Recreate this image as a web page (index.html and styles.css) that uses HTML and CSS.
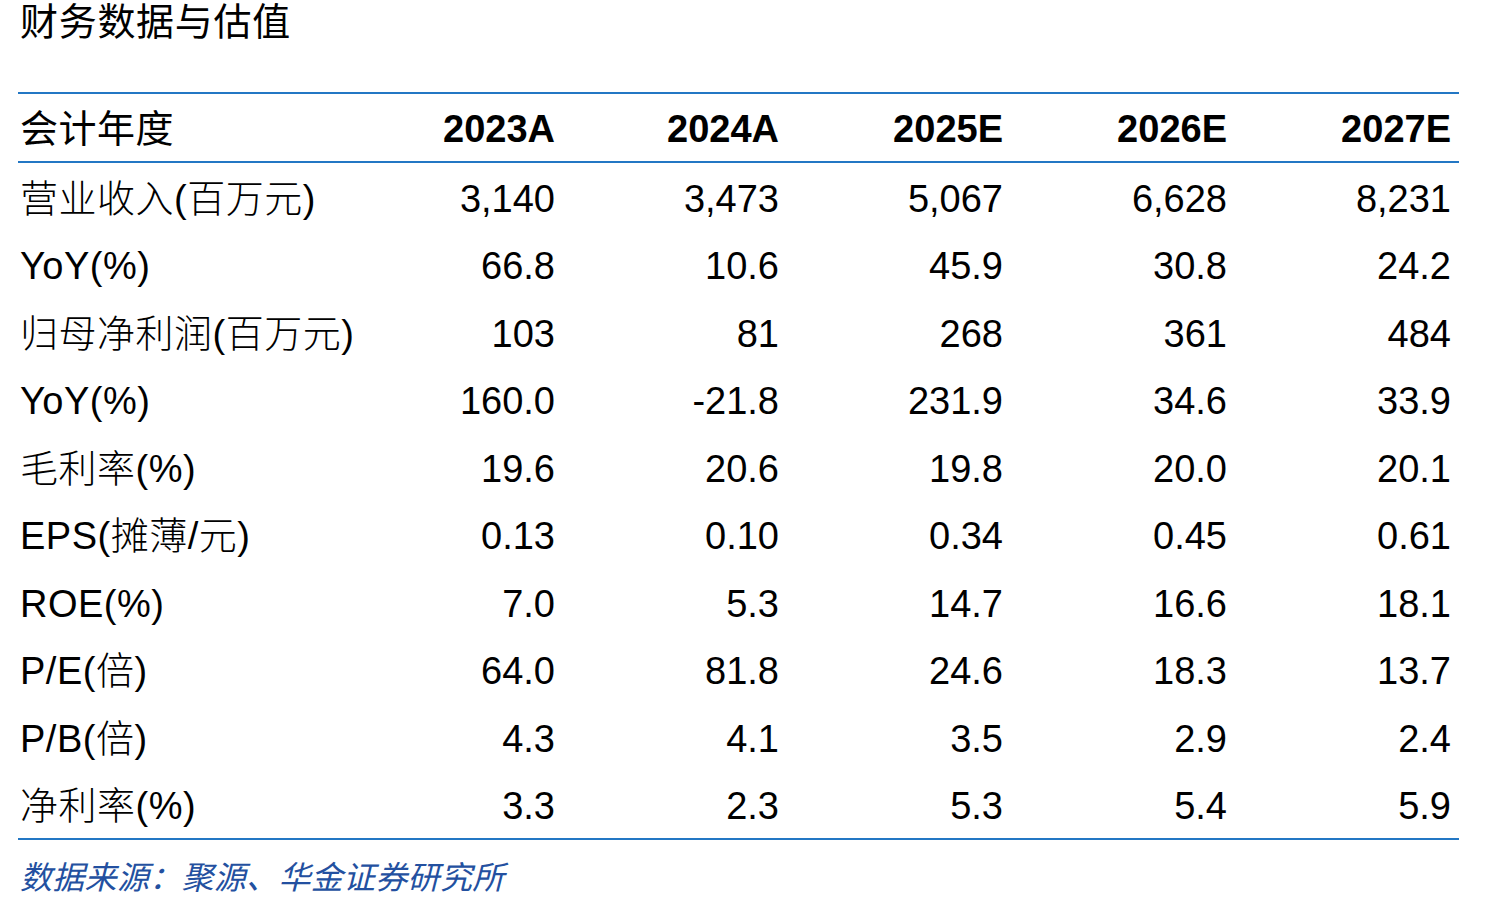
FILE: index.html
```html
<!DOCTYPE html>
<html lang="zh-CN">
<head>
<meta charset="utf-8">
<title>财务数据与估值</title>
<link rel="stylesheet" href="styles.css">
</head>
<body>
<div class="page">
  <div class="title">财务数据与估值</div>
  <div class="table">
    <div class="row head">
      <div class="label">会计年度</div>
      <div class="val">2023A</div>
      <div class="val">2024A</div>
      <div class="val">2025E</div>
      <div class="val">2026E</div>
      <div class="val">2027E</div>
    </div>
    <div class="row">
      <div class="label">营业收入(百万元)</div>
      <div class="val">3,140</div><div class="val">3,473</div><div class="val">5,067</div><div class="val">6,628</div><div class="val">8,231</div>
    </div>
    <div class="row">
      <div class="label">YoY(%)</div>
      <div class="val">66.8</div><div class="val">10.6</div><div class="val">45.9</div><div class="val">30.8</div><div class="val">24.2</div>
    </div>
    <div class="row">
      <div class="label">归母净利润(百万元)</div>
      <div class="val">103</div><div class="val">81</div><div class="val">268</div><div class="val">361</div><div class="val">484</div>
    </div>
    <div class="row">
      <div class="label">YoY(%)</div>
      <div class="val">160.0</div><div class="val">-21.8</div><div class="val">231.9</div><div class="val">34.6</div><div class="val">33.9</div>
    </div>
    <div class="row">
      <div class="label">毛利率(%)</div>
      <div class="val">19.6</div><div class="val">20.6</div><div class="val">19.8</div><div class="val">20.0</div><div class="val">20.1</div>
    </div>
    <div class="row">
      <div class="label">EPS(摊薄/元)</div>
      <div class="val">0.13</div><div class="val">0.10</div><div class="val">0.34</div><div class="val">0.45</div><div class="val">0.61</div>
    </div>
    <div class="row">
      <div class="label">ROE(%)</div>
      <div class="val">7.0</div><div class="val">5.3</div><div class="val">14.7</div><div class="val">16.6</div><div class="val">18.1</div>
    </div>
    <div class="row">
      <div class="label">P/E(倍)</div>
      <div class="val">64.0</div><div class="val">81.8</div><div class="val">24.6</div><div class="val">18.3</div><div class="val">13.7</div>
    </div>
    <div class="row">
      <div class="label">P/B(倍)</div>
      <div class="val">4.3</div><div class="val">4.1</div><div class="val">3.5</div><div class="val">2.9</div><div class="val">2.4</div>
    </div>
    <div class="row last">
      <div class="label">净利率(%)</div>
      <div class="val">3.3</div><div class="val">2.3</div><div class="val">5.3</div><div class="val">5.4</div><div class="val">5.9</div>
    </div>
  </div>
  <div class="source">数据来源：聚源、华金证券研究所</div>
</div>
</body>
</html>
```
FILE: styles.css
```css
html, body {
  margin: 0;
  padding: 0;
  background: #ffffff;
}

body {
  font-family: "Liberation Sans", "Noto Sans CJK SC", sans-serif;
  color: #000000;
}

.page {
  padding-left: 18px;
  width: 1441px;
}

.title {
  font-size: 38px;
  line-height: 44px;
  height: 44px;
  padding-left: 2px;
  letter-spacing: 0.7px;
}

.table {
  margin-top: 48px;
  border-top: 2px solid #2377c4;
  border-bottom: 2px solid #2377c4;
}

.row {
  display: grid;
  grid-template-columns: 313px repeat(5, 224px);
  box-sizing: border-box;
  padding-right: 6px;
  padding-top: 4px;
  height: 67.5px;
  align-items: center;
  font-size: 38px;
  line-height: 44px;
}

.row.head {
  height: 69px;
  padding-top: 2px;
  border-bottom: 2px solid #2377c4;
}

.row.head .val {
  font-weight: bold;
}

.label {
  padding-left: 2px;
  white-space: nowrap;
  overflow: visible;
  letter-spacing: 0.5px;
  font-weight: 300;
}

.row.head .label {
  font-weight: 400;
}

.val {
  text-align: right;
  white-space: nowrap;
}

.source {
  margin-top: 18px;
  padding-left: 2px;
  font-size: 32px;
  line-height: 40px;
  font-style: italic;
  color: #2350a0;
  letter-spacing: 0.3px;
}
```
